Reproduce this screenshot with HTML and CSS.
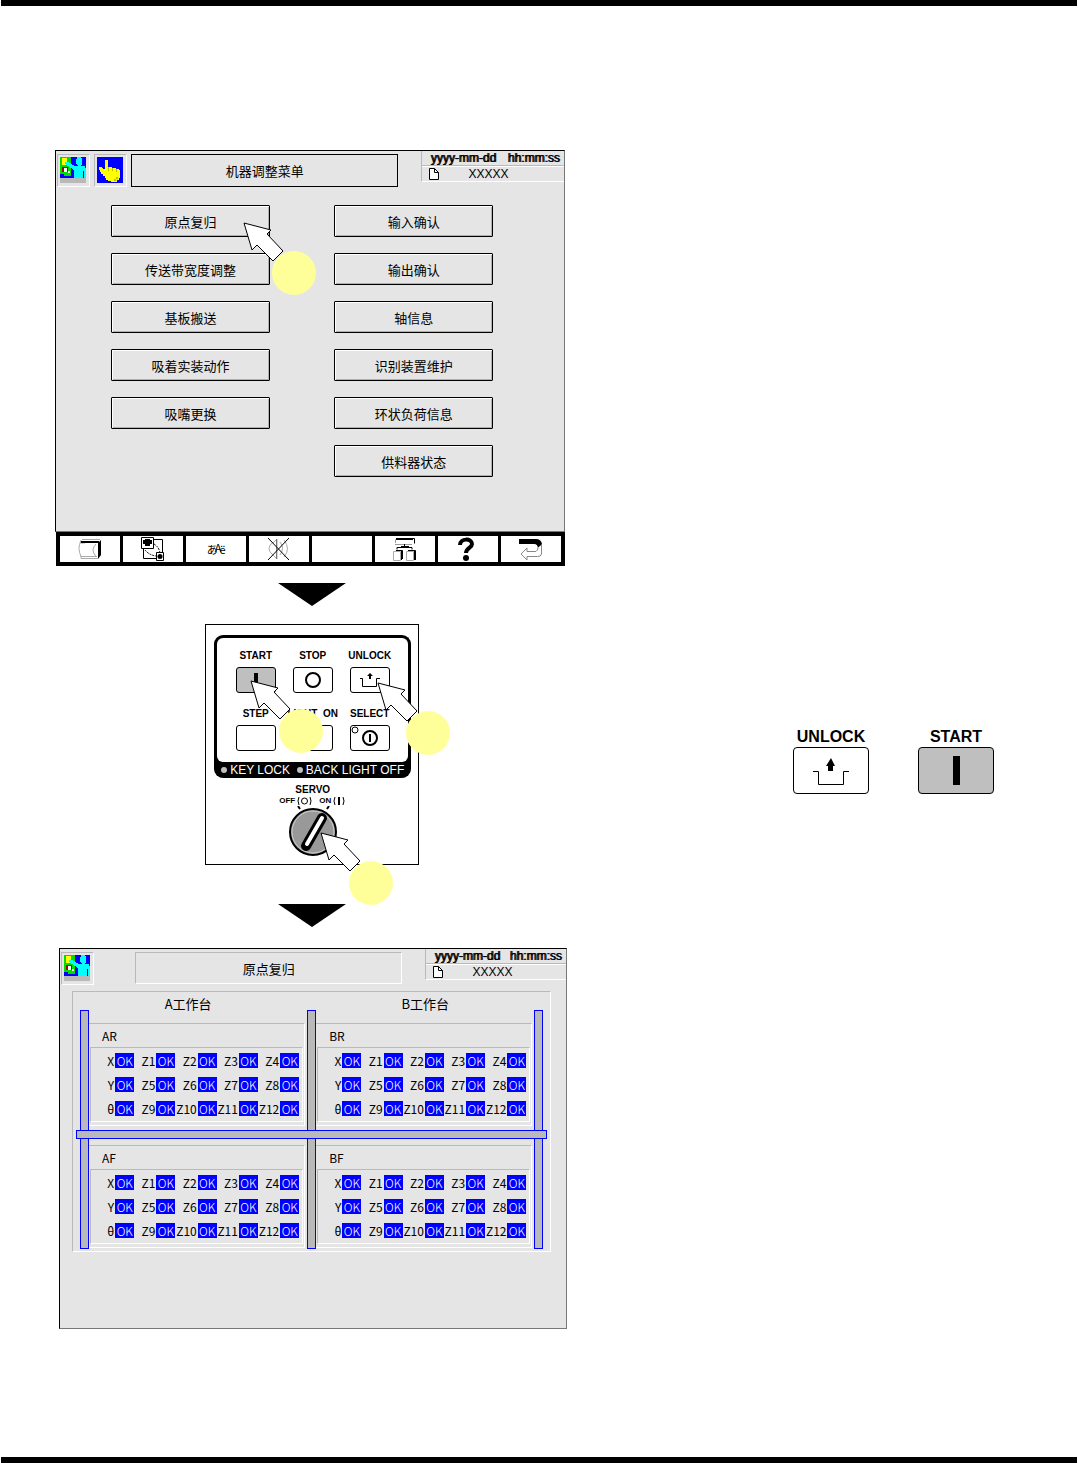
FILE: index.html
```
<!DOCTYPE html>
<html lang="zh-CN">
  <head>
    <meta charset="utf-8">
    <title>原点复归</title>
    <link rel="stylesheet" href="styles.css">
  </head>
  <body>
    <!-- shared shapes -->
    <svg class="defs" width="0" height="0">
      <symbol id="operator" viewBox="0 0 26 26">
        <g shape-rendering="crispEdges">
          <path fill="#00f" d="M0 0h26v21H0z"/>
          <path fill="#0d0" d="M0 0h11v19H4v-2H0z"/>
          <path fill="#ff0" d="M2 1h5v7H2z"/>
          <path fill="#a00" d="M2 10h6v5H2z"/>
          <path fill="#fff" d="M4 11h3v4H4zM8 14h2v2H8z"/>
          <path fill="#0ff" d="M17 0h0 4v1h1v7h-1v1h4v2h1v10h-2v-7h-1v7h-9v-8l-9-6V5h3l7 4h3V8h-1V7h-1V2h1z"/>
          <path fill="#b9b9b9" d="M0 21h26v5H0z"/>
        </g>
      </symbol>
      <symbol id="hand" viewBox="0 0 26 26">
        <g shape-rendering="crispEdges">
          <path fill="#00f" d="M0 0h26v26H0z"/>
          <path fill="#ff0" d="M8 3h3v7h4v1h4v1h3v1h1v8h-1v2h-2v2h-6v-1h-3v-1h-2v-2H8v-2H6v-2H4v-2H3v-2H2v-3h3v1h1v1h2z"/>
          <path fill="#bb0" d="M11 10h1v4h-1zM15 11h1v3h-1zM19 12h1v3h-1zM19 20h2v2h-2zM17 22h2v2h-2z"/>
        </g>
      </symbol>
      <symbol id="file" viewBox="0 0 10 12">
        <path d="M.5.500h5l4 4v7h-9z" fill="#fff" stroke="#000"/>
        <path d="M5.500.500v4h4" fill="none" stroke="#000"/>
      </symbol>
      <symbol id="unlock" viewBox="0 0 38 28">
        <path d="M1 14.500h5.500v13h25v-13H37" fill="none" stroke="#000"/>
        <path d="M19 1l4 8h-2v5h-5V9h-2z"/>
      </symbol>
      <symbol id="pointer" viewBox="0 0 74 74">
        <path d="M1 1l27 7-4 4 16 17-10 10-16-16-5 5z" fill="#fff" stroke="#000"/>
        <circle cx="51" cy="51" r="22" fill="#ff9"/>
      </symbol>
    </svg>

    <main class="page">
      <section class="step">
        <div class="screen-wrap">
          <div class="screen">
            <div class="topbar">
              <span class="icon-box"><svg width="26" height="26"><use href="#operator"/></svg></span>
              <span class="icon-box"><svg width="26" height="26"><use href="#hand"/></svg></span>
              <h2 class="title">机器调整菜单</h2>
              <div class="status">
                <div class="clock"><span>yyyy-mm-dd</span><span>hh:mm:ss</span></div>
                <div class="file"><svg width="10" height="12"><use href="#file"/></svg><span>XXXXX</span></div>
              </div>
            </div>
            <div class="menu">
              <div class="menu-col">
                <div class="pointed">
                  <button type="button" class="menu-btn">原点复归</button>
                  <svg class="pointer pointer-menu"><use href="#pointer"/></svg>
                </div>
                <button type="button" class="menu-btn">传送带宽度调整</button>
                <button type="button" class="menu-btn">基板搬送</button>
                <button type="button" class="menu-btn">吸着实装动作</button>
                <button type="button" class="menu-btn">吸嘴更换</button>
              </div>
              <div class="menu-col">
                <button type="button" class="menu-btn">输入确认</button>
                <button type="button" class="menu-btn">输出确认</button>
                <button type="button" class="menu-btn">轴信息</button>
                <button type="button" class="menu-btn">识别装置维护</button>
                <button type="button" class="menu-btn">环状负荷信息</button>
                <button type="button" class="menu-btn">供料器状态</button>
              </div>
            </div>
          </div>
          <div class="toolbar">
            <button type="button" aria-label="手册">
              <svg width="24" height="22" viewBox="0 0 24 22" fill="none">
                <path d="M3 3Q-1 10 3 18.500h16M3 17.500v3h17M18 6q-6 6 0 12.500M3 2l-1 3h5" stroke="#aaa"/>
                <path d="M4 1.500h18" stroke="#aaa"/>
                <path d="M3 3h18v2H3zM20 5l3-3v15l-3 4z" fill="#000"/>
              </svg>
            </button>
            <button type="button" aria-label="切换">
              <svg width="26" height="24" viewBox="0 0 26 24" fill="none" stroke="#000">
                <path d="M12 2.500h10.500v15M3.500 12v9.500h14"/>
                <path d="M14 7q5 3 6 9M5 13q4 5 11 6" stroke-dasharray="2 1"/>
                <path d="M1.500.500h12v11h-12zM16.500 15.500h7v8h-7z" fill="#fff"/>
                <path d="M3 3h2V2h5v1h2v4h-2v2H5V7H3z" fill="#000" stroke="none"/>
                <circle cx="20" cy="19.500" r="2.500" fill="#000" stroke="none"/>
              </svg>
            </button>
            <button type="button" class="lang"><span>あ</span><sup>A</sup><span>ё</span></button>
            <button type="button" aria-label="静音">
              <svg width="26" height="24" viewBox="0 0 26 24" fill="none">
                <path d="M7 5q-8 7 0 13M7 6l4-4v20l-4-4M14 5q5 6 0 13M18 3q7 9 0 17" stroke="#aaa"/>
                <path d="M10.500 2v20" stroke="#777"/>
                <path d="M2 1l21 22M23 1L2 23" stroke="#000"/>
              </svg>
            </button>
            <button type="button" aria-label="空"></button>
            <button type="button" aria-label="层级">
              <svg width="24" height="24" viewBox="0 0 24 24" fill="none" stroke="#000">
                <path d="M2.500 6V2.500M2 7.500h17" stroke="#999"/>
                <path d="M3 1.500h18.500v5M3 2.500h17"/>
                <path d="M11.500 7v3M8 9.500h8M4 12.500v-2h15v2"/>
                <path d="M.5 14.500h7v9h-7zM13.500 14.500h7v9h-7z" fill="#fff" stroke="#aaa"/>
                <path d="M3 13.500h6.500V22M15 13.500h7.500V23M8.500 14v9M21.500 14v9"/>
              </svg>
            </button>
            <button type="button" aria-label="帮助">
              <svg width="22" height="24" viewBox="0 0 22 24">
                <path d="M3 8C3 1 15 1 15 7c0 4-6 4-6 9" fill="none" stroke="#000" stroke-width="4"/>
                <circle cx="9" cy="21" r="3"/>
              </svg>
            </button>
            <button type="button" aria-label="返回">
              <svg width="24" height="24" viewBox="0 0 24 24">
                <path d="M0 2h17q5 0 6 5l-4 5q0-5-4-5H0z"/>
                <path d="M22.500 8v9q-1 3-4 2.500H8V23l-6-6 6-6v3.500h9q2-1 2-4" fill="#fff" stroke="#888"/>
              </svg>
            </button>
          </div>
        </div>
      </section>

      <section class="step">
        <div class="control-col">
          <svg class="down" viewBox="0 0 68 23"><path d="M0 0h68L34 23z"/></svg>
          <div class="controller">
            <div class="keypad">
              <div class="keys">
                <div class="key">
                  <label for="k-start">START</label>
                  <button type="button" id="k-start" class="gray"><svg width="4" height="14"><path d="M0 0h4v14H0z"/></svg></button>
                  <svg class="pointer pointer-start"><use href="#pointer"/></svg>
                </div>
                <div class="key">
                  <label for="k-stop">STOP</label>
                  <button type="button" id="k-stop"><svg width="18" height="18"><circle cx="9" cy="9" r="7" fill="none" stroke="#000" stroke-width="2"/></svg></button>
                </div>
                <div class="key">
                  <label for="k-unlock">UNLOCK</label>
                  <button type="button" id="k-unlock">
                    <svg width="20" height="14" viewBox="0 0 20 14"><path d="M0 5.500h2.500v8h14v-8H20" fill="none" stroke="#000"/><path d="M10 0l3 3h-2v3H9V3H7z"/></svg>
                  </button>
                  <svg class="pointer pointer-unlock"><use href="#pointer"/></svg>
                </div>
                <div class="key">
                  <label for="k-step">STEP</label>
                  <button type="button" id="k-step"></button>
                </div>
                <div class="key">
                  <label for="k-light">LIGHT&nbsp; ON</label>
                  <button type="button" id="k-light"></button>
                </div>
                <div class="key">
                  <label for="k-select">SELECT</label>
                  <button type="button" id="k-select">
                    <svg width="38" height="24" viewBox="0 0 38 24">
                      <circle cx="4" cy="4" r="3" fill="none" stroke="#000"/>
                      <circle cx="19" cy="12" r="7" fill="none" stroke="#000" stroke-width="2"/>
                      <path d="M18 8h2v8h-2z"/>
                    </svg>
                  </button>
                </div>
              </div>
              <div class="lamps"><span>KEY LOCK</span><span>BACK LIGHT OFF</span></div>
            </div>
            <div class="servo">
              <strong>SERVO</strong>
              <div class="servo-pos">
                <span>OFF</span>
                <svg width="17" height="10" viewBox="0 0 17 10" fill="none" stroke="#000"><path d="M3 1Q1 5 3 9M14 1q2 4 0 8"/><circle cx="8.500" cy="5" r="3"/></svg>
                <span class="on">ON</span>
                <svg width="14" height="10" viewBox="0 0 14 10" fill="none" stroke="#000"><path d="M3 1Q1 5 3 9M11 1q2 4 0 8"/><path d="M7 1v8" stroke-width="2"/></svg>
              </div>
              <div class="dial">
                <svg width="50" height="50" viewBox="0 0 50 50">
                  <path d="M10 0l2 3M41 0l-2 3" stroke="#000" stroke-width="2"/>
                  <circle cx="25" cy="26" r="23" fill="#999" stroke="#000" stroke-width="2"/>
                  <circle cx="25" cy="26" r="21" fill="none" stroke="#ccc"/>
                  <path d="M34 12L18 40" stroke="#000" stroke-width="10" stroke-linecap="round"/>
                  <path d="M34 12L19 38" stroke="#fff" stroke-width="4" stroke-linecap="round"/>
                </svg>
                <svg class="pointer pointer-servo"><use href="#pointer"/></svg>
              </div>
            </div>
          </div>
          <svg class="down down-last" viewBox="0 0 68 23"><path d="M0 0h68L34 23z"/></svg>
        </div>
        <div class="legend">
          <div class="big-key">
            <label for="b-unlock">UNLOCK</label>
            <button type="button" id="b-unlock"><svg width="38" height="28"><use href="#unlock"/></svg></button>
          </div>
          <div class="big-key">
            <label for="b-start">START</label>
            <button type="button" id="b-start" class="gray"><svg width="7" height="29"><path d="M0 0h7v29H0z"/></svg></button>
          </div>
        </div>
      </section>

      <section class="step">
        <div class="screen result">
          <div class="topbar">
            <span class="icon-box"><svg width="26" height="26"><use href="#operator"/></svg></span>
            <h2 class="title sunken">原点复归</h2>
            <div class="status">
              <div class="clock"><span>yyyy-mm-dd</span><span>hh:mm:ss</span></div>
              <div class="file"><svg width="10" height="12"><use href="#file"/></svg><span>XXXXX</span></div>
            </div>
          </div>
          <div class="tables">
            <h3 class="head-a">A工作台</h3>
            <h3 class="head-b">B工作台</h3>
            <div class="quad ar">
              <h4>AR</h4>
              <table>
                <tr><th>X</th><td>OK</td><th>Z1</th><td>OK</td><th>Z2</th><td>OK</td><th>Z3</th><td>OK</td><th>Z4</th><td>OK</td></tr>
                <tr><th>Y</th><td>OK</td><th>Z5</th><td>OK</td><th>Z6</th><td>OK</td><th>Z7</th><td>OK</td><th>Z8</th><td>OK</td></tr>
                <tr><th>θ</th><td>OK</td><th>Z9</th><td>OK</td><th>Z10</th><td>OK</td><th>Z11</th><td>OK</td><th>Z12</th><td>OK</td></tr>
              </table>
            </div>
            <div class="quad br">
              <h4>BR</h4>
              <table>
                <tr><th>X</th><td>OK</td><th>Z1</th><td>OK</td><th>Z2</th><td>OK</td><th>Z3</th><td>OK</td><th>Z4</th><td>OK</td></tr>
                <tr><th>Y</th><td>OK</td><th>Z5</th><td>OK</td><th>Z6</th><td>OK</td><th>Z7</th><td>OK</td><th>Z8</th><td>OK</td></tr>
                <tr><th>θ</th><td>OK</td><th>Z9</th><td>OK</td><th>Z10</th><td>OK</td><th>Z11</th><td>OK</td><th>Z12</th><td>OK</td></tr>
              </table>
            </div>
            <div class="quad af">
              <h4>AF</h4>
              <table>
                <tr><th>X</th><td>OK</td><th>Z1</th><td>OK</td><th>Z2</th><td>OK</td><th>Z3</th><td>OK</td><th>Z4</th><td>OK</td></tr>
                <tr><th>Y</th><td>OK</td><th>Z5</th><td>OK</td><th>Z6</th><td>OK</td><th>Z7</th><td>OK</td><th>Z8</th><td>OK</td></tr>
                <tr><th>θ</th><td>OK</td><th>Z9</th><td>OK</td><th>Z10</th><td>OK</td><th>Z11</th><td>OK</td><th>Z12</th><td>OK</td></tr>
              </table>
            </div>
            <div class="quad bf">
              <h4>BF</h4>
              <table>
                <tr><th>X</th><td>OK</td><th>Z1</th><td>OK</td><th>Z2</th><td>OK</td><th>Z3</th><td>OK</td><th>Z4</th><td>OK</td></tr>
                <tr><th>Y</th><td>OK</td><th>Z5</th><td>OK</td><th>Z6</th><td>OK</td><th>Z7</th><td>OK</td><th>Z8</th><td>OK</td></tr>
                <tr><th>θ</th><td>OK</td><th>Z9</th><td>OK</td><th>Z10</th><td>OK</td><th>Z11</th><td>OK</td><th>Z12</th><td>OK</td></tr>
              </table>
            </div>
            <i class="rail rail-1"></i>
            <i class="rail rail-2"></i>
            <i class="rail rail-3"></i>
            <i class="rail rail-h"></i>
          </div>
        </div>
      </section>
    </main>
  </body>
</html>
```
FILE: styles.css
```
* {
  box-sizing: border-box;
}

body {
  margin: 0 1px;
  background: #fff;
  color: #000;
  font-family: "Liberation Sans", "Noto Sans CJK SC", sans-serif;
}

button {
  padding: 0;
  margin: 0;
  font-family: inherit;
  color: #000;
  cursor: pointer;
}

svg {
  display: block;
}

h2,
h3,
h4 {
  margin: 0;
  font-weight: normal;
}

.defs {
  position: absolute;
}

.page {
  min-height: 100vh;
  padding: 144px 54px 48px;
  border-top: 6px solid #000;
  border-bottom: 6px solid #000;
}

.step {
  display: grid;
  grid-template-columns: 9fr 8fr;
}

/* machine screens */
.screen-wrap {
  margin-right: 2px;
}

.screen {
  min-height: 382px;
  background: #e5e5e5;
  border: 1px solid #000;
  border-right-color: #777;
  border-bottom-color: #777;
  font-family: "Noto Sans CJK SC", sans-serif;
}

.topbar {
  display: flex;
  align-items: flex-start;
  gap: 4px;
  padding-left: 1px;
}

.icon-box {
  margin-top: 3px;
  padding: 2px 3px 3px 2px;
  border: 1px solid #b9b9b9;
  border-right-color: #fff;
  border-bottom-color: #fff;
}

.title {
  flex: 1;
  height: 33px;
  margin: 3px 19px 0 0;
  border: 1px solid #000;
  font-size: 13px;
  line-height: 31px;
  text-align: center;
}

.title.sunken {
  height: 32px;
  margin-left: 37px;
  border-color: #b9b9b9 #fff #fff #b9b9b9;
}

.status {
  width: 143px;
  border-left: 1px solid #b9b9b9;
  border-bottom: 1px solid #fff;
  font-family: "Liberation Sans", sans-serif;
  font-size: 12px;
}

.result .status {
  width: 141px;
}

.clock {
  display: flex;
  justify-content: space-between;
  padding: 0 5px 0 8px;
  line-height: 14px;
  border-bottom: 1px solid #b9b9b9;
  text-shadow: 1px 0 #000;
}

.file {
  display: flex;
  align-items: center;
  gap: 29px;
  padding-left: 7px;
  line-height: 14px;
  border-top: 1px solid #fff;
}

/* adjustment menu */
.menu {
  display: grid;
  grid-template-columns: 1fr 1fr;
  gap: 64px;
  padding: 18px 71px 54px 55px;
}

.menu-col {
  display: flex;
  flex-direction: column;
  gap: 16px;
}

.pointed {
  position: relative;
}

.menu-btn {
  display: block;
  width: 100%;
  height: 32px;
  background: #e5e5e5;
  border: 1px solid #000;
  border-radius: 1px;
  box-shadow: inset 1px 1px #fff, inset -1px -1px #b0b0b0;
  font-size: 13px;
}

.pointer {
  position: absolute;
  z-index: 2;
  width: 74px;
  height: 74px;
}

.pointer-menu {
  top: 17px;
  right: -47px;
}

.toolbar {
  display: grid;
  grid-template-columns: repeat(8, 1fr);
  gap: 3px;
  margin-left: 1px;
  padding: 4px;
  background: #000;
}

.toolbar button {
  display: flex;
  align-items: center;
  justify-content: center;
  height: 26px;
  background: #fff;
  border: 0;
}

.toolbar .lang {
  font-family: "Noto Sans CJK JP", sans-serif;
  font-size: 11px;
  line-height: 12px;
}

.lang sup {
  font-size: 11px;
  line-height: 4px;
  margin: 0 -2px 4px -3px;
}

.down {
  width: 68px;
  height: 23px;
  margin: 17px auto 18px;
}

.down-last {
  margin: 39px auto 21px;
}

/* operation box */
.control-col {
  padding-left: 2px;
}

.controller {
  width: 214px;
  height: 241px;
  margin: 0 auto;
  padding: 10px 7px 0 8px;
  border: 1px solid #000;
}

.keypad {
  border: 3px solid #000;
  border-bottom: 0;
  border-radius: 9px;
  background: #000;
}

.keys {
  display: grid;
  grid-template-columns: repeat(3, 40px);
  justify-content: center;
  column-gap: 17px;
  row-gap: 15px;
  padding: 12px 0 11px;
  border-radius: 6px;
  background: #fff;
}

.key {
  position: relative;
  display: flex;
  flex-direction: column;
  align-items: center;
  gap: 5px;
}

.key label,
.servo strong {
  font-size: 10px;
  font-weight: bold;
  line-height: 12px;
  white-space: nowrap;
}

.key button,
.big-key button {
  display: flex;
  align-items: center;
  justify-content: center;
  width: 40px;
  height: 26px;
  background: #fff;
  border: 1px solid #000;
  border-radius: 3px;
}

.key .gray,
.big-key .gray {
  background: #bfbfbf;
}

.pointer-start {
  top: 30px;
  left: 14px;
}

.pointer-unlock {
  top: 32px;
  left: 27px;
}

.lamps {
  display: flex;
  justify-content: space-between;
  padding: 0 4px;
  color: #fff;
  font-size: 12px;
  line-height: 16px;
}

.lamps span {
  display: flex;
  align-items: center;
  gap: 3px;
}

.lamps span::before {
  content: "";
  width: 6px;
  height: 6px;
  border-radius: 50%;
  background: #bfbfbf;
}

.servo {
  display: flex;
  flex-direction: column;
  align-items: center;
  padding-top: 6px;
}

.servo-pos {
  display: flex;
  align-items: center;
  gap: 1px;
  font-size: 8px;
  font-weight: bold;
  line-height: 10px;
}

.servo-pos .on {
  margin-left: 5px;
}

.dial {
  position: relative;
}

.pointer-servo {
  top: 26px;
  left: 32px;
}

/* enlarged keys */
.legend {
  display: flex;
  justify-content: flex-end;
  align-items: flex-start;
  gap: 49px;
  padding: 161px 29px 0 0;
}

.big-key {
  display: flex;
  flex-direction: column;
  align-items: center;
}

.big-key label {
  font-size: 16px;
  font-weight: bold;
  line-height: 20px;
}

.big-key button {
  width: 76px;
  height: 47px;
  border-radius: 4px;
}

/* origin return result */
.result {
  min-height: 381px;
  margin-left: 4px;
}

.tables {
  display: grid;
  grid-template-columns: 9px 1fr 9px 1fr 9px;
  grid-template-rows: 18px 120px 9px 110px;
  margin: 6px 15px 0 12px;
  padding: 0 7px 2px;
  border: 1px solid #b9b9b9;
  border-right-color: #fff;
  border-bottom-color: #fff;
}

.tables h3 {
  grid-row: 1;
  font-size: 13px;
  line-height: 24px;
  text-align: center;
}

.head-a {
  grid-column: 2;
  padding-right: 20px;
}

.head-b {
  grid-column: 4;
}

.quad {
  align-self: end;
  margin: 0 2px 4px 0;
  padding: 0 1px 0 1px;
  border-top: 1px solid #b9b9b9;
  border-right: 1px solid #fff;
  border-bottom: 1px solid #fff;
}

.ar,
.br {
  grid-row: 2;
}

.af,
.bf {
  grid-row: 4;
  margin-bottom: 1px;
}

.ar,
.af {
  grid-column: 2;
}

.br,
.bf {
  grid-column: 4;
}

.quad h4 {
  padding-left: 12px;
  font-size: 12px;
  line-height: 23px;
}

.quad table {
  width: 100%;
  margin-bottom: 3px;
  padding: 0 3px 0 2px;
  table-layout: fixed;
  border-collapse: separate;
  border-spacing: 0 1px;
  border: 1px solid #b9b9b9;
  border-right-color: #fff;
  border-bottom-color: #fff;
  font-size: 12px;
  line-height: 22px;
}

.quad th,
.quad td {
  padding: 0;
  height: 23px;
  font-weight: normal;
  text-align: right;
}

.quad th {
  padding-right: 1px;
}

.quad td {
  width: 19px;
  color: #fff;
  background: linear-gradient(#00f, #00f) center / 100% 15px no-repeat;
  font-weight: 300;
  text-align: center;
}

.rail {
  background: #b9b9b9;
  border: 1px solid #00f;
}

.rail-1,
.rail-2,
.rail-3 {
  grid-row: 2 / 5;
}

.rail-1 {
  grid-column: 1;
}

.rail-2 {
  grid-column: 3;
}

.rail-3 {
  grid-column: 5;
}

.rail-h {
  grid-row: 3;
  grid-column: 1 / 6;
  margin: 0 -4px;
}
```
